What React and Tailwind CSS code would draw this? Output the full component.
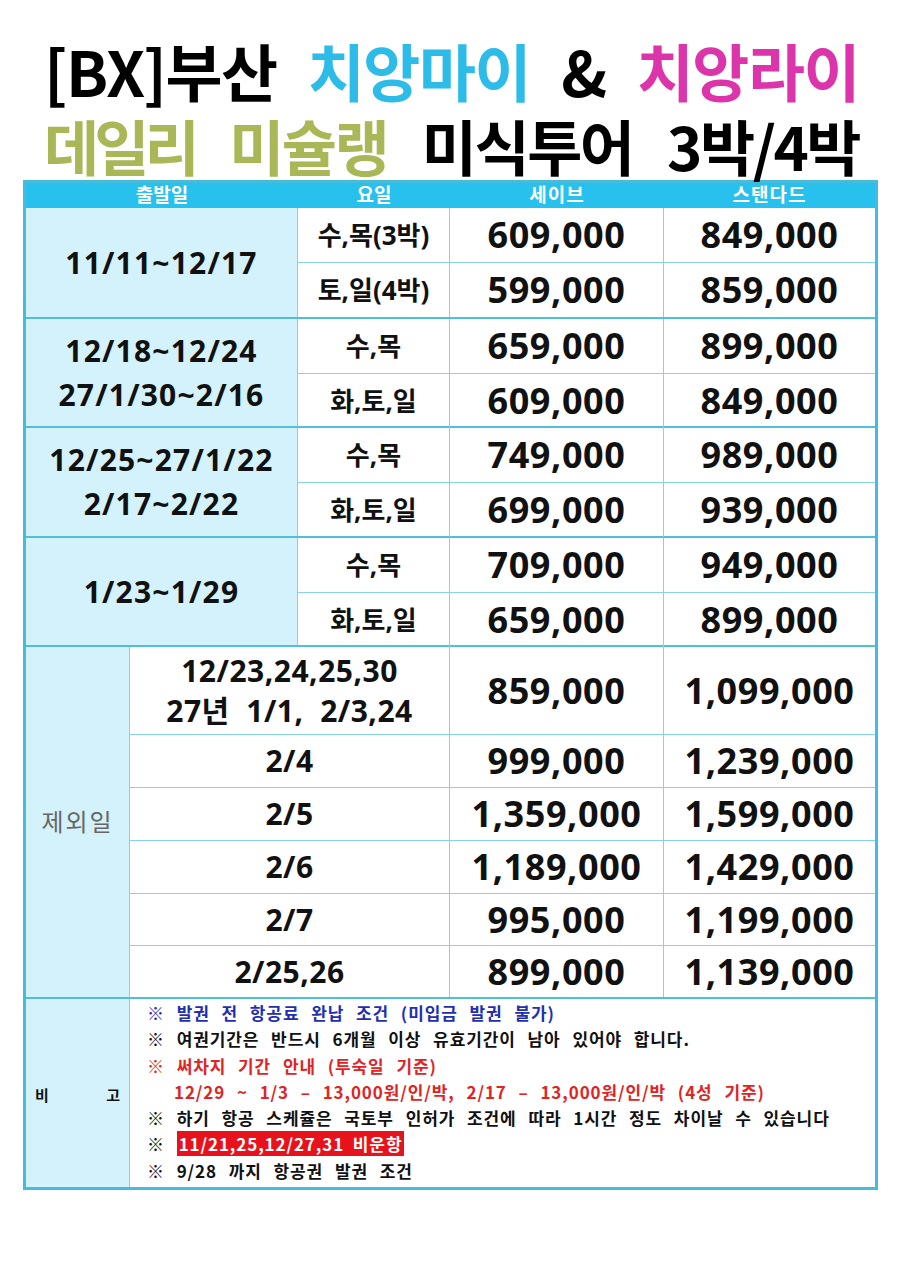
import React from "react";

const groups = [
  { dates: ["11/11~12/17"], rows: [["수,목(3박)", "609,000", "849,000"], ["토,일(4박)", "599,000", "859,000"]] },
  { dates: ["12/18~12/24", "27/1/30~2/16"], rows: [["수,목", "659,000", "899,000"], ["화,토,일", "609,000", "849,000"]] },
  { dates: ["12/25~27/1/22", "2/17~2/22"], rows: [["수,목", "749,000", "989,000"], ["화,토,일", "699,000", "939,000"]] },
  { dates: ["1/23~1/29"], rows: [["수,목", "709,000", "949,000"], ["화,토,일", "659,000", "899,000"]] },
];

const excl = [
  { d: ["12/23,24,25,30", "27년  1/1,  2/3,24"], a: "859,000", b: "1,099,000" },
  { d: ["2/4"], a: "999,000", b: "1,239,000" },
  { d: ["2/5"], a: "1,359,000", b: "1,599,000" },
  { d: ["2/6"], a: "1,189,000", b: "1,429,000" },
  { d: ["2/7"], a: "995,000", b: "1,199,000" },
  { d: ["2/25,26"], a: "899,000", b: "1,139,000" },
];
const exclH = ["h-[87px]", "h-[53px]", "h-[53px]", "h-[53px]", "h-[52px]", "h-[52px]"];

function Group({ g, first, h }) {
  return (
    <div className={`flex ${h} ${first ? "" : "border-t-2 border-[#4fbfdc]"}`}>
      <div className="w-[272px] shrink-0 bg-[#d4f2fb] border-r border-[#86d3e6] flex flex-col items-center justify-center">
        {g.dates.map((d, i) => (
          <div key={i} className="text-[30px] font-bold tracking-[1.2px] leading-[44px] text-[#111]">
            {d}
          </div>
        ))}
      </div>
      <div className="flex-1 flex flex-col">
        {g.rows.map((r, i) => (
          <div key={i} className={`flex flex-1 ${i > 0 ? "border-t border-[#86d3e6]" : ""}`}>
            <div className="w-[152px] shrink-0 border-r border-[#86d3e6] flex items-center justify-center text-[26px] font-bold text-[#111]">
              {r[0]}
            </div>
            <div className="w-[214px] shrink-0 border-r border-[#86d3e6] flex items-center justify-center text-[36px] font-bold tracking-[0.6px] text-[#111]">
              {r[1]}
            </div>
            <div className="flex-1 flex items-center justify-center text-[36px] font-bold tracking-[0.6px] text-[#111]">
              {r[2]}
            </div>
          </div>
        ))}
      </div>
    </div>
  );
}

export default function App() {
  return (
    <div
      className="w-[900px] h-[1273px] bg-white overflow-hidden"
      style={{ fontFamily: "'Open Sans', 'Noto Sans CJK KR', sans-serif" }}
    >
      {/* Title */}
      <div className="pt-[30px] pl-[44px] pr-[41px] font-bold" style={{ fontFamily: "'Noto Sans CJK KR', sans-serif" }}>
        <div className="h-[80px] flex items-center justify-between text-[62px] tracking-[-1.5px] leading-none">
          <span className="text-black">[BX]부산</span>
          <span className="text-[#2dbbe8]">치앙마이</span>
          <span className="text-black">&amp;</span>
          <span className="text-[#dc35ac]">치앙라이</span>
        </div>
        <div className="h-[70px] flex items-center justify-between text-[60px] tracking-[-2.5px] leading-none">
          <span className="text-[#a9b757] tracking-[-5px]">데일리</span>
          <span className="text-[#a9b757]">미슐랭</span>
          <span className="text-black">미식투어</span>
          <span className="text-black">3박/4박</span>
        </div>
      </div>

      {/* Table */}
      <div className="ml-[23px] w-[855px] border-[3px] border-[#45bcdb]">
        {/* header */}
        <div className="flex h-[25px] bg-[#28c0ec] text-white text-[19px] leading-none font-bold">
          <div className="w-[272px] shrink-0 flex items-center justify-center">출발일</div>
          <div className="w-[152px] shrink-0 flex items-center justify-center">요일</div>
          <div className="w-[214px] shrink-0 flex items-center justify-center tracking-[1px]">세이브</div>
          <div className="flex-1 flex items-center justify-center tracking-[1px]">스탠다드</div>
        </div>

        <Group g={groups[0]} first h="h-[109px]" />
        <Group g={groups[1]} h="h-[109px]" />
        <Group g={groups[2]} h="h-[110px]" />
        <Group g={groups[3]} h="h-[109px]" />

        {/* exclusion */}
        <div className="flex border-t-2 border-[#4fbfdc]">
          <div className="w-[104px] shrink-0 bg-[#d4f2fb] border-r border-[#86d3e6] flex items-center justify-center text-[24px] text-[#666] tracking-[2px] font-normal">
            제외일
          </div>
          <div className="flex-1 flex flex-col">
            {excl.map((r, i) => (
              <div key={i} className={`flex ${exclH[i]} ${i > 0 ? "border-t border-[#86d3e6]" : ""}`}>
                <div className="w-[320px] shrink-0 border-r border-[#86d3e6] flex flex-col items-center justify-center text-[30px] font-bold tracking-[0.5px] text-[#111]">
                  {r.d.map((d, j) => (
                    <div key={j} className="leading-[40px] whitespace-pre">{d}</div>
                  ))}
                </div>
                <div className="w-[214px] shrink-0 border-r border-[#86d3e6] flex items-center justify-center text-[36px] font-bold tracking-[0.6px] text-[#111]">
                  {r.a}
                </div>
                <div className="flex-1 flex items-center justify-center text-[36px] font-bold tracking-[0.6px] text-[#111]">
                  {r.b}
                </div>
              </div>
            ))}
          </div>
        </div>

        {/* notes */}
        <div className="flex h-[190px] border-t-2 border-[#4fbfdc]">
          <div className="w-[104px] shrink-0 bg-[#d4f2fb] border-r border-[#86d3e6] flex items-center justify-between px-[9px] pt-[4px] text-[15px] font-bold text-[#111]">
            <span>비</span>
            <span>고</span>
          </div>
          <div
            className="flex-1 pl-[17px] pt-[1px] text-[17px] font-bold leading-[26.3px] tracking-[0.9px] [word-spacing:7px] text-[#111]"
            style={{ fontFamily: "'Noto Sans CJK KR', sans-serif" }}
          >
            <div className="text-[#1f2fb0]">※ 발권 전 항공료 완납 조건 (미입금 발권 불가)</div>
            <div>※ 여권기간은 반드시 6개월 이상 유효기간이 남아 있어야 합니다.</div>
            <div className="text-[#e02424]">※ 써차지 기간 안내 (투숙일 기준)</div>
            <div className="text-[#e02424] pl-[27px]">12/29 ~ 1/3 – 13,000원/인/박, 2/17 – 13,000원/인/박 (4성 기준)</div>
            <div>※ 하기 항공 스케쥴은 국토부 인허가 조건에 따라 1시간 정도 차이날 수 있습니다</div>
            <div>
              ※ <span className="bg-[#e8121c] text-white px-[2px] [word-spacing:4px]">11/21,25,12/27,31 비운항</span>
            </div>
            <div>※ 9/28 까지 항공권 발권 조건</div>
          </div>
        </div>
      </div>
    </div>
  );
}
